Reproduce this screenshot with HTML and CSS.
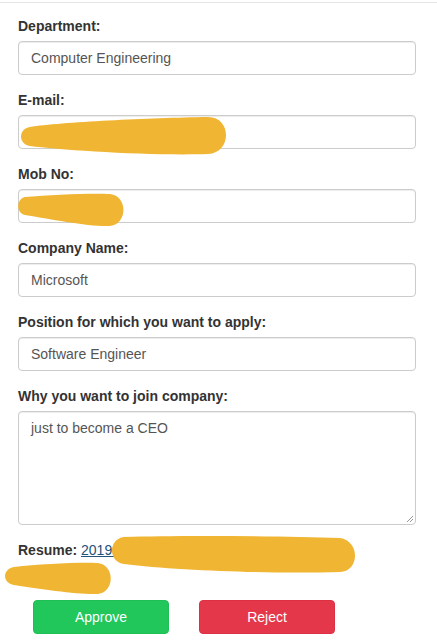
FILE: index.html
```html
<!DOCTYPE html>
<html>
<head>
<meta charset="utf-8">
<link rel="stylesheet" href="styles.css">
</head>
<body>
<div class="panel">
  <div class="form-group">
    <label class="label">Department:</label>
    <div class="input">Computer Engineering</div>
  </div>
  <div class="form-group">
    <label class="label">E-mail:</label>
    <div class="input"></div>
  </div>
  <div class="form-group">
    <label class="label">Mob No:</label>
    <div class="input"></div>
  </div>
  <div class="form-group">
    <label class="label">Company Name:</label>
    <div class="input">Microsoft</div>
  </div>
  <div class="form-group">
    <label class="label">Position for which you want to apply:</label>
    <div class="input">Software Engineer</div>
  </div>
  <div class="form-group">
    <label class="label">Why you want to join company:</label>
    <div class="input textarea">just to become a CEO
      <svg class="grip" width="8" height="8" viewBox="0 0 8 8"><path d="M1 7 L7 1 M4 7 L7 4" stroke="#999" stroke-width="1"/></svg>
    </div>
  </div>
  <div class="resume">
    <span class="label-inline">Resume:</span> <a class="link" href="#">20190</a>
  </div>
  <div class="actions">
    <button class="btn btn-approve">Approve</button>
    <button class="btn btn-reject">Reject</button>
  </div>
</div>
<svg class="redact" width="437" height="640" viewBox="0 0 437 640">
  <g fill="#f0b532">
    <path d="M30 127 C60 122 150 118 208 117 C232 117 232 153 208 154 C150 156 60 150 30 146 C18 144 18 129 30 127 Z"/>
    <path d="M25 197 C50 195 90 193 110 194 C128 196 128 224 110 226 C90 227 50 219 25 215 C16 213 16 199 25 197 Z"/>
    <path d="M124 537 C180 535 280 536 340 538 C360 541 360 571 340 572 C280 574 180 571 124 564 C108 562 108 539 124 537 Z"/>
    <path d="M14 567 C40 564 80 562 98 563 C115 565 115 592 98 594 C80 595 40 589 14 585 C2 583 2 569 14 567 Z"/>
  </g>
</svg>
</body>
</html>
```

FILE: styles.css
```css
* { box-sizing: border-box; }
body {
  margin: 0;
  background: #fff;
  font-family: "Liberation Sans", Arial, sans-serif;
  font-size: 14px;
  line-height: 20px;
  color: #333;
  position: relative;
}
.panel {
  margin-top: 2px;
  border-top: 1px solid #e5e5e5;
  padding: 13px 21px 0 18px;
}
.form-group {
  display: flex;
  flex-direction: column;
  margin-bottom: 15px;
}
.label {
  font-weight: bold;
  margin-bottom: 5px;
  height: 20px;
}
.input {
  height: 34px;
  border: 1px solid #ccc;
  border-radius: 4px;
  padding: 6px 12px;
  color: #555;
  font-size: 14px;
  line-height: 20px;
  box-shadow: inset 0 1px 1px rgba(0,0,0,0.075);
}
.textarea {
  height: 114px;
  position: relative;
}
.grip {
  position: absolute;
  right: 1px;
  bottom: 1px;
}
.resume {
  height: 40px;
  line-height: 20px;
}
.label-inline { font-weight: bold; }
.link { color: #23527c; text-decoration: underline; }
.actions {
  display: flex;
  gap: 30px;
  padding-left: 15px;
  margin-top: 20px;
}
.btn {
  width: 136px;
  height: 34px;
  border-radius: 4px;
  font-family: "Liberation Sans", Arial, sans-serif;
  font-size: 14px;
  color: #fff;
  padding: 6px 12px;
}
.btn-approve { background: #21c75a; border: 1px solid #1fbf55; }
.btn-reject { background: #e4384a; border: 1px solid #dc3044; }
.redact {
  position: absolute;
  top: 0;
  left: 0;
  pointer-events: none;
}
```
